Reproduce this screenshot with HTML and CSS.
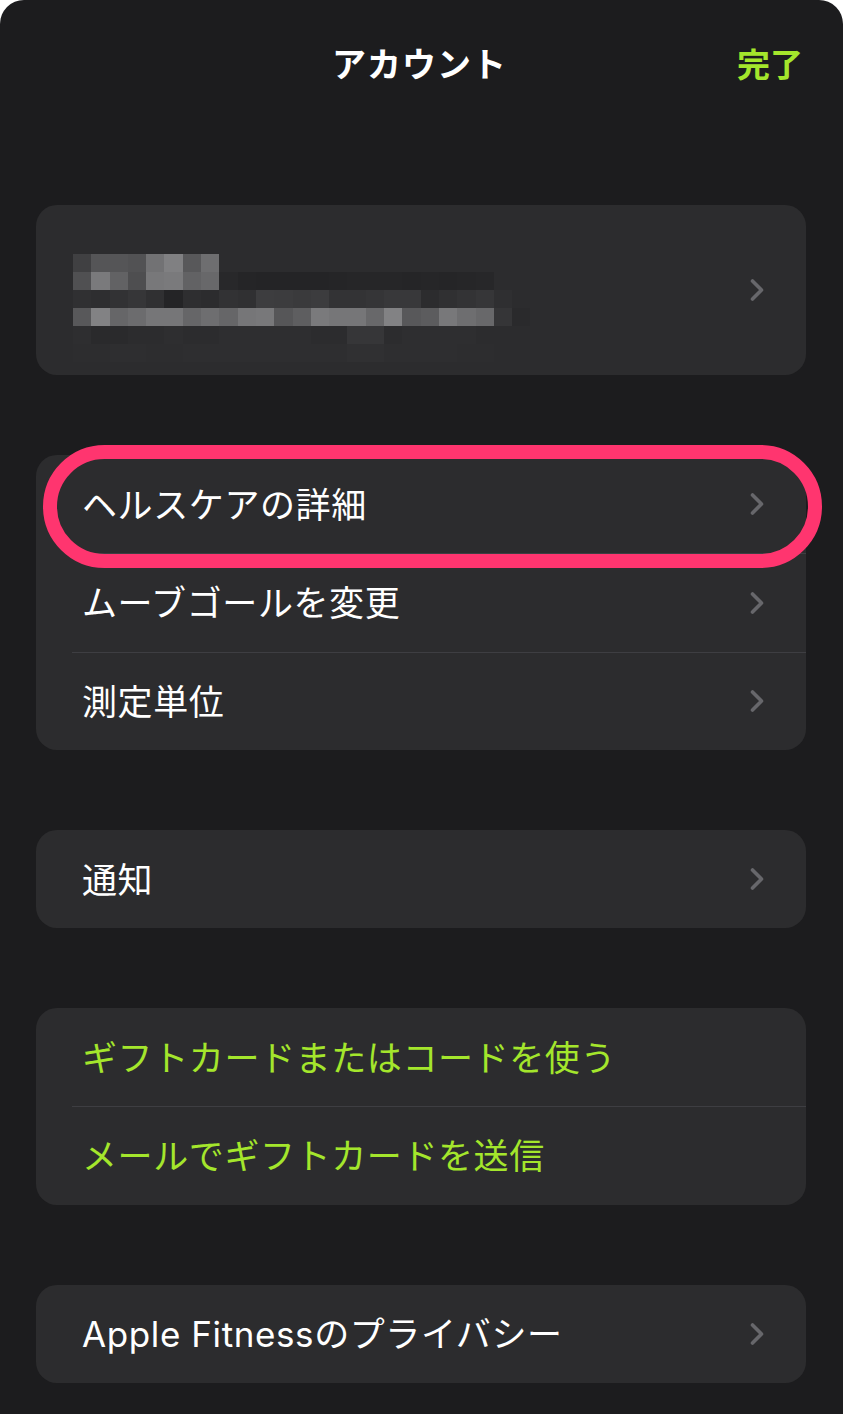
FILE: index.html
```html
<!DOCTYPE html>
<html lang="ja">
<head>
    <meta charset="UTF-8">
    <title>アカウント</title>
    <link rel="stylesheet" href="styles.css">
</head>
<body>
<div class="sheet">
    <div class="header">
        <span></span>
        <h1 class="title">アカウント</h1>
        <a class="done">完了</a>
    </div>

    <div class="card profile">
        <div class="mosaic" id="mosaic"></div>
        <span class="chev"><svg width="16" height="26" viewBox="0 0 16 26"><path d="M3.5 4 L12.5 13 L3.5 22"/></svg></span>
    </div>

    <div class="card">
        <div class="row"><span>ヘルスケアの詳細</span><span class="chev"><svg width="16" height="26" viewBox="0 0 16 26"><path d="M3.5 4 L12.5 13 L3.5 22"/></svg></span></div>
        <div class="row"><span>ムーブゴールを変更</span><span class="chev"><svg width="16" height="26" viewBox="0 0 16 26"><path d="M3.5 4 L12.5 13 L3.5 22"/></svg></span></div>
        <div class="row"><span>測定単位</span><span class="chev"><svg width="16" height="26" viewBox="0 0 16 26"><path d="M3.5 4 L12.5 13 L3.5 22"/></svg></span></div>
        <div class="ring"></div>
    </div>

    <div class="card">
        <div class="row"><span>通知</span><span class="chev"><svg width="16" height="26" viewBox="0 0 16 26"><path d="M3.5 4 L12.5 13 L3.5 22"/></svg></span></div>
    </div>

    <div class="card">
        <div class="row green"><span>ギフトカードまたはコードを使う</span></div>
        <div class="row green"><span>メールでギフトカードを送信</span></div>
    </div>

    <div class="card">
        <div class="row"><span>Apple Fitnessのプライバシー</span><span class="chev"><svg width="16" height="26" viewBox="0 0 16 26"><path d="M3.5 4 L12.5 13 L3.5 22"/></svg></span></div>
    </div>
</div>
<script src="script.js"></script>
</body>
</html>
```

FILE: styles.css
```css
*{
    margin: 0;
    padding: 0;
    box-sizing: border-box;
}
html,body{
    background: #fff;
}
body{
    font-family: "Inter", "Noto Sans CJK JP", sans-serif;
    color: #fff;
}
.sheet{
    background: #1c1c1e;
    min-height: 1414px;
    border-radius: 24px 24px 0 0;
    padding: 0 37px 32px 36px;
}
.header{
    height: 126px;
    display: grid;
    grid-template-columns: 1fr auto 1fr;
    align-items: center;
    margin: 0 -37px 0 -36px;
    padding: 0 40px 0 36px;
}
.title{
    font-family: "Noto Sans CJK JP", sans-serif;
    font-size: 34px;
    font-weight: 700;
    letter-spacing: 1px;
    line-height: 1;
}
.done{
    justify-self: end;
    font-family: "Noto Sans CJK JP", sans-serif;
    font-size: 33px;
    font-weight: 700;
    color: #a4e62c;
    line-height: 1;
}
.card{
    background: #2c2c2e;
    border-radius: 21px;
    margin-top: 80px;
    position: relative;
}
.profile{
    margin-top: 79px;
    height: 170px;
    display: flex;
    justify-content: space-between;
    align-items: center;
    padding: 0 41px 0 37px;
}
.mosaic{
    align-self: flex-start;
    margin-top: 49px;
    display: grid;
    grid-template-columns: repeat(25, 18.3px);
    grid-auto-rows: 18px;
}
.mosaic i{
    display: block;
}
.row{
    height: 98px;
    margin-left: 36px;
    padding: 0 41px 4px 10px;
    display: flex;
    justify-content: space-between;
    align-items: center;
    font-size: 35px;
    letter-spacing: 0.6px;
}
.row .chev{
    margin-top: 4px;
}
.row + .row{
    border-top: 1px solid #3e3e42;
    height: 98.5px;
}
.green{
    color: #a4e62c;
}
.chev{
    display: flex;
}
.chev svg path{
    fill: none;
    stroke: #67676b;
    stroke-width: 3.6;
    stroke-linecap: round;
    stroke-linejoin: round;
}
.ring{
    position: absolute;
    left: 7px;
    top: -10px;
    width: 779px;
    height: 123px;
    border: 14px solid #ff356f;
    border-radius: 62px;
    pointer-events: none;
}
```

FILE: script.js
```js
// モザイク（ぼかしたプロフィール）
var grid = [
    [0x40,0x55,0x55,0x52,0x72,0x80,0x58,0x6e],
    [0x50,0x7a,0x62,0x4e,0x78,0x7a,0x62,0x68,0x28,0x25,0x24,0x24,0x24,0x24,0x25,0x26,0x26,0x26,0x25,0x26,0x25,0x26,0x27],
    [0x30,0x2e,0x32,0x36,0x30,0x24,0x2e,0x2c,0x32,0x30,0x3d,0x3c,0x3a,0x3c,0x33,0x33,0x35,0x38,0x38,0x2c,0x30,0x33,0x36,0x2f],
    [0x58,0x82,0x66,0x6c,0x76,0x76,0x66,0x6e,0x66,0x76,0x78,0x56,0x5e,0x7a,0x76,0x76,0x68,0x82,0x58,0x5c,0x78,0x6e,0x68,0x35,0x2a],
    [0x2e,0x2a,0x2a,0x2c,0x2c,0x2e,0x2c,0x2c,0x2e,0x2e,0x2e,0x2e,0x2e,0x2c,0x2c,0x36,0x36,0x2c,0x2e,0x2e,0x2e,0x2e,0x2c],
    [0x2d,0x2d,0x2e,0x2e,0x2d,0x2d,0x2e,0x2e,0x2e,0x2e,0x2e,0x2e,0x2e,0x2e,0x2e,0x30,0x30,0x2e,0x2e,0x2e,0x2e,0x2d,0x2d]
];
var mosaic = document.getElementById("mosaic");
for (var r = 0; r < grid.length; r++) {
    for (var c = 0; c < 25; c++) {
        var cell = document.createElement("i");
        var v = grid[r][c];
        if (v) {
            cell.style.background = "rgb(" + v + "," + v + "," + (v + 2) + ")";
        }
        mosaic.appendChild(cell);
    }
}
```
